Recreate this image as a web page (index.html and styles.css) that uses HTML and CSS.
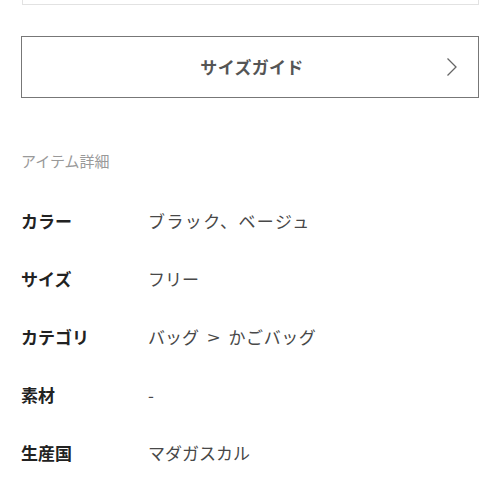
FILE: index.html
```html
<!DOCTYPE html>
<html lang="ja">
<head>
    <meta charset="UTF-8">
    <meta name="viewport" content="width=device-width, initial-scale=1.0">
    <title>アイテム詳細</title>
    <link rel="stylesheet" href="styles.css">
</head>
<body>
    <div class="item_wrap">
        <div class="prev_box"></div>

        <a class="size_guide" href="#">
            <span class="size_guide_text">サイズガイド</span>
            <svg class="chevron" width="12" height="20" viewBox="0 0 12 20">
                <polyline points="1.5,1.5 10,10 1.5,18.5" fill="none" stroke="#666" stroke-width="1.3"/>
            </svg>
        </a>

        <h2 class="detail_title">アイテム詳細</h2>

        <dl class="detail_list">
            <dt>カラー</dt>
            <dd class="wide">ブラック、ベージュ</dd>
            <dt>サイズ</dt>
            <dd>フリー</dd>
            <dt>カテゴリ</dt>
            <dd>バッグ<span class="sep">&gt;</span><span class="sub">かごバッグ</span></dd>
            <dt>素材</dt>
            <dd>-</dd>
            <dt>生産国</dt>
            <dd>マダガスカル</dd>
        </dl>
    </div>
</body>
</html>
```

FILE: styles.css
```css
body{
    margin:0;
    background:#fff;
    font-family:"Noto Sans CJK JP", "Noto Sans", sans-serif;
}

.item_wrap{
    padding:0 21px 0 21px;
}

.prev_box{
    height:4px;
    margin:0 0 0 1px;
    border:1px solid #e2e2e2;
    border-top:none;
}

.size_guide{
    display:flex;
    align-items:center;
    justify-content:center;
    position:relative;
    box-sizing:border-box;
    height:62px;
    margin-top:31px;
    border:1px solid #777;
    text-decoration:none;
}

.size_guide_text{
    font-size:17px;
    font-weight:bold;
    color:#555;
    line-height:24px;
    letter-spacing:0.3px;
    margin-right:-4px;
}

.chevron{
    position:absolute;
    right:20px;
    top:20px;
}

.detail_title{
    margin:51px 0 0 0;
    font-size:15px;
    font-weight:normal;
    line-height:24px;
    color:#999;
}

.detail_list{
    display:grid;
    grid-template-columns:127px 1fr;
    grid-auto-rows:58px;
    align-items:center;
    margin:19px 0 0 0;
    font-size:17px;
    line-height:24px;
}

.detail_list dt{
    font-weight:bold;
    color:#222;
}

.detail_list dd{
    margin:0;
    color:#484848;
}

.detail_list .wide{
    letter-spacing:1.4px;
}

.sep{
    display:inline-block;
    margin:0 10px 0 10px;
    transform:scaleX(1.3);
}

.sub{
    letter-spacing:0.6px;
}
```
